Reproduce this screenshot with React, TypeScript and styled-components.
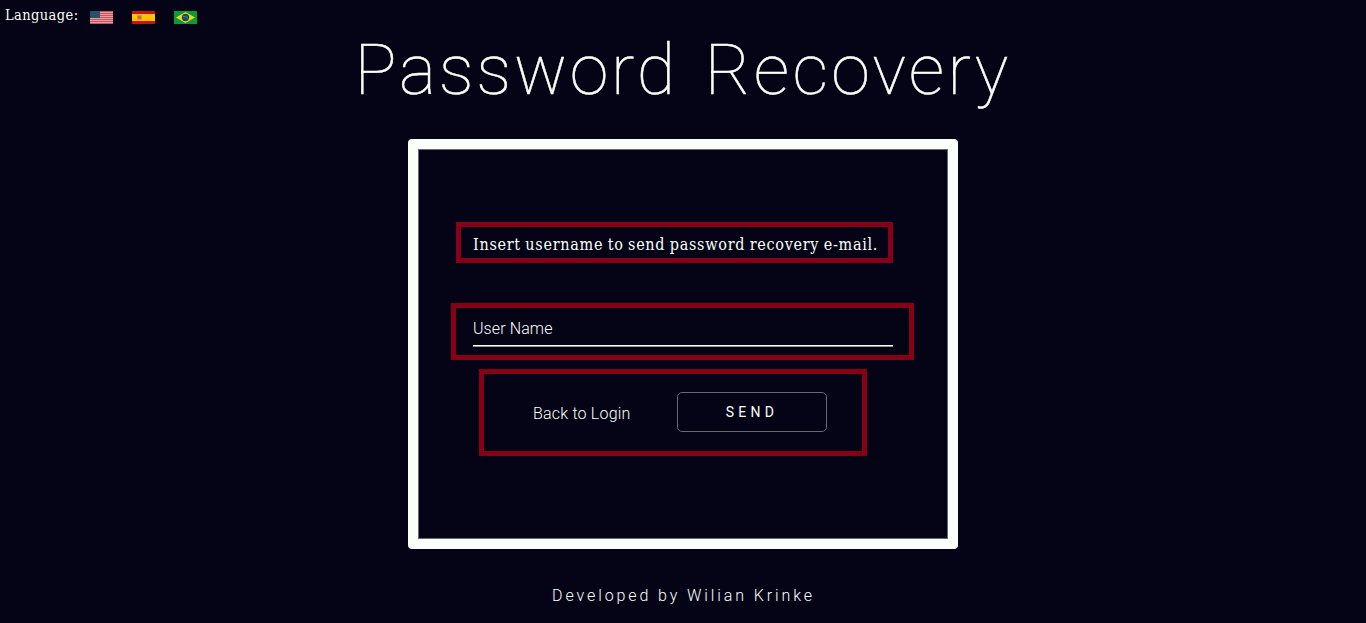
import React from "react";
import styled, { createGlobalStyle } from "styled-components";

const GlobalStyle = createGlobalStyle`
  * { box-sizing: border-box; }
  body { margin: 0; background: #050416; color: #fafffa; overflow: hidden; }
`;

const Page = styled.div`
  position: relative;
  height: 623px;
  display: flex;
  flex-direction: column;
  align-items: center;
  background: #050416;
  font-family: Roboto, "Liberation Sans", sans-serif;
`;

const LanguageBar = styled.header`
  align-self: stretch;
  display: flex;
  align-items: center;
  height: 30px;
  padding-left: 5px;
`;

const LanguageLabel = styled.span`
  width: 85px;
  font: 14.5px/20px "DejaVu Serif Condensed", "DejaVu Serif", serif;
  font-stretch: condensed;
  letter-spacing: 0.4px;
  white-space: nowrap;
`;

const FlagButton = styled.a`
  display: block;
  width: 23px;
  height: 13px;
  margin: 4px 19px 0 0;
  svg { display: block; }
`;

const Title = styled.h1`
  display: flex;
  gap: 27px;
  margin: 0;
  height: 109px;
  padding: 1px 0 0 0;
  font-size: 70px;
  line-height: 78px;
  font-weight: 100;
  -webkit-text-stroke: 0.5px #fafffa;
  white-space: nowrap;
`;

const TitleWord = styled.span<{ $spacing: number }>`
  letter-spacing: ${(p) => p.$spacing}px;
`;

const Card = styled.main`
  flex: none;
  width: 550px;
  height: 410px;
  padding: 83px 53px 0 55px;
  border: 10px solid #fafffa;
  border-radius: 4px;
  box-shadow: inset 0 0 0 1px #68686f;
`;

const Hint = styled.p`
  margin: 0;
  padding-top: 1px;
  font: 16px/24px "DejaVu Serif Condensed", "DejaVu Serif", serif;
  font-stretch: condensed;
  letter-spacing: 0.72px;
  word-spacing: -0.8px;
  white-space: nowrap;
`;

const UserField = styled.label`
  display: block;
  width: 420px;
  height: 30px;
  margin-top: 59px;
  border-bottom: 1px solid #fafffa;
  box-shadow: 0 1px #96978f;
  font-size: 16px;
  line-height: 25px;
  font-weight: 300;
  letter-spacing: 0.1px;
`;

const Actions = styled.div`
  display: flex;
  align-items: center;
  height: 40px;
  margin-top: 46px;
  padding-left: 60px;
`;

const BackLink = styled.a`
  width: 144px;
  padding-top: 3px;
  font-size: 16px;
  font-weight: 300;
  letter-spacing: 0.2px;
`;

const SendButton = styled.button`
  width: 150px;
  height: 40px;
  padding: 0;
  border: 1px solid #68686f;
  border-radius: 5px;
  background: transparent;
  color: #fafffa;
  font: 400 14px Roboto, sans-serif;
  letter-spacing: 4.3px;
`;

const Footer = styled.footer`
  margin-top: 35px;
  padding-left: 1px;
  font-size: 16px;
  line-height: 24px;
  font-weight: 300;
  letter-spacing: 2.9px;
  white-space: nowrap;
`;

const Highlight = styled.div<{ $x: number; $y: number; $w: number; $h: number }>`
  position: absolute;
  left: ${(p) => p.$x}px;
  top: ${(p) => p.$y}px;
  width: ${(p) => p.$w}px;
  height: ${(p) => p.$h}px;
  border: 5px solid #880015;
  pointer-events: none;
`;

const UsFlag = () => (
  <svg width="23" height="13" viewBox="0 0 23 13">
    <path fill="#e2a0a4" d="M0 0h23v13H0z" />
    <path stroke="#c9535d" d="M0 .5h23M0 2.5h23M0 4.5h23M0 6.5h23M0 8.5h23M0 10.5h23M0 12.5h23" />
    <path fill="#285068" d="M0 0h10v7H0z" />
  </svg>
);

const SpainFlag = () => (
  <svg width="23" height="13" viewBox="0 0 23 13">
    <path fill="#c8101f" d="M0 0h23v13H0z" />
    <path fill="#ffc400" d="M0 3h23v7H0z" />
    <path fill="#e09a18" d="M5 4h5v5H5z" />
    <path fill="#b9744b" d="M6 5h3v3H6z" />
  </svg>
);

const BrazilFlag = () => (
  <svg width="23" height="13" viewBox="0 0 23 13">
    <path fill="#079b3a" d="M0 0h23v13H0z" />
    <path fill="#eddb10" d="M11.5 1 21 6.5 11.5 12 2 6.5z" />
    <circle cx="11.5" cy="6.5" r="3.7" fill="#164a72" />
    <path d="M8.5 5.2q3.5 0 5.8 2.2" fill="none" stroke="#7499a0" strokeWidth=".7" />
  </svg>
);

export default function App() {
  return (
    <Page>
      <GlobalStyle />
      <LanguageBar>
        <LanguageLabel>Language:</LanguageLabel>
        <FlagButton><UsFlag /></FlagButton>
        <FlagButton><SpainFlag /></FlagButton>
        <FlagButton><BrazilFlag /></FlagButton>
      </LanguageBar>
      <Title>
        <TitleWord $spacing={2.8}>Password</TitleWord>{" "}
        <TitleWord $spacing={3.3}>Recovery</TitleWord>
      </Title>
      <Card>
        <Hint>Insert username to send password recovery e-mail.</Hint>
        <UserField>User Name</UserField>
        <Actions>
          <BackLink>Back to Login</BackLink>
          <SendButton>SEND</SendButton>
        </Actions>
      </Card>
      <Footer>Developed by Wilian Krinke</Footer>
      <Highlight $x={456} $y={222} $w={437} $h={41} />
      <Highlight $x={451} $y={303} $w={463} $h={57} />
      <Highlight $x={479} $y={369} $w={388} $h={87} />
    </Page>
  );
}
